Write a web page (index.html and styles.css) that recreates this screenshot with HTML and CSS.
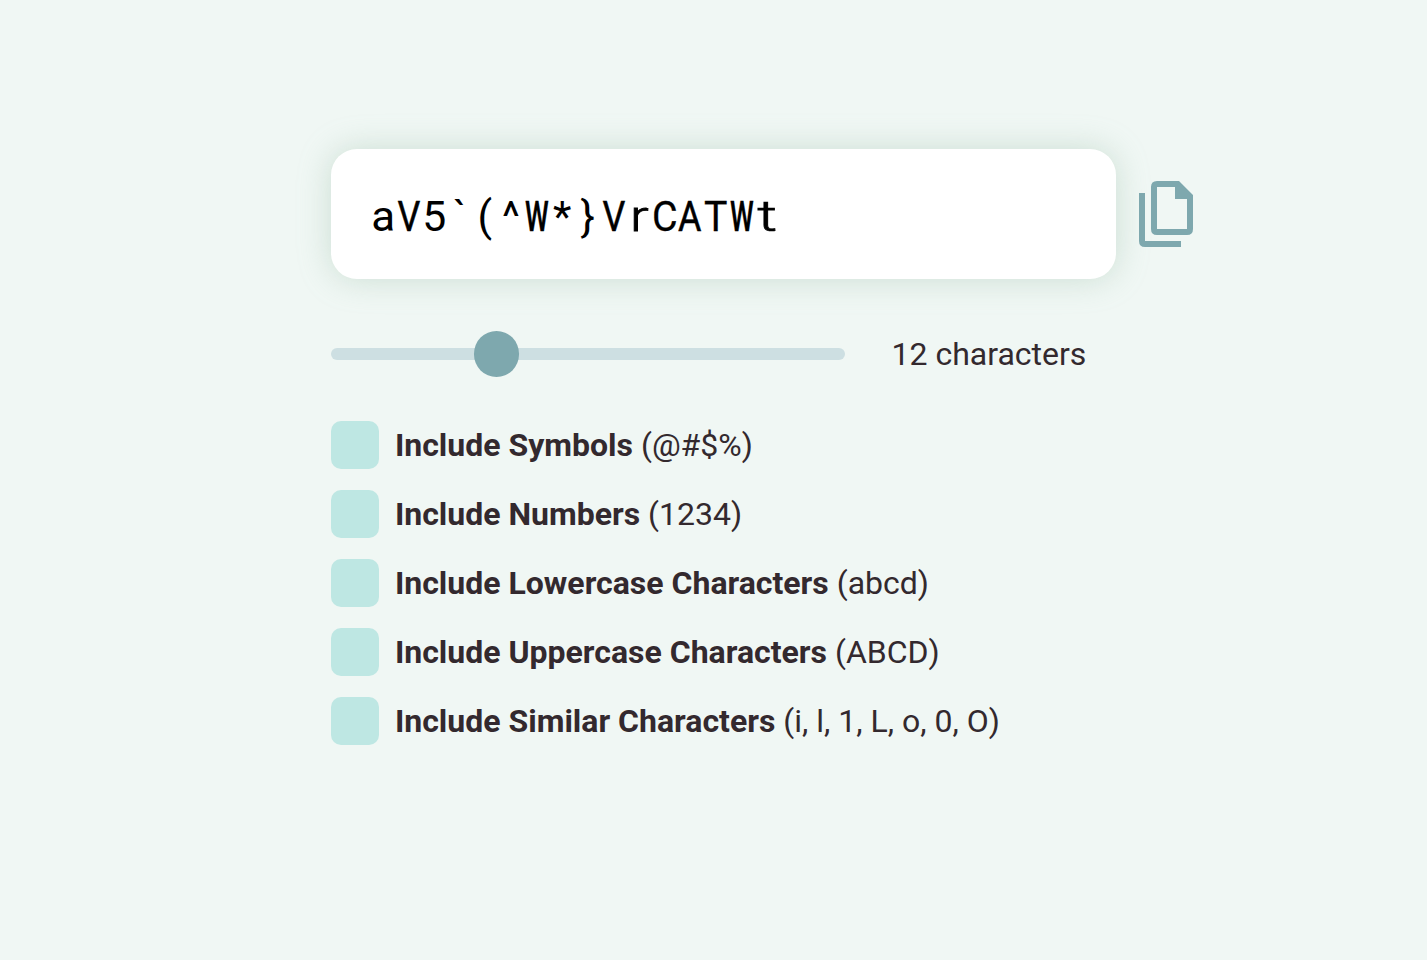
FILE: index.html
```html
<!DOCTYPE html>
<html lang="en">
<head>
<meta charset="utf-8">
<title>Password generator</title>
<link rel="stylesheet" href="styles.css">
</head>
<body>
<main class="generator">
  <div class="result">
    <div class="password"><span class="a">a</span><span class="cap">V</span><span>5</span><span class="tick">`</span><span class="paren">(</span><span class="caret">^</span><span class="w">W</span><span class="star">*</span><span class="brace">}</span><span class="cap">V</span><span class="r">r</span><span class="c">C</span><span class="cap">A</span><span class="c">T</span><span class="w">W</span><span class="t">t</span></div>
    <svg class="copy" viewBox="0 0 54 66" role="img" aria-label="Copy"><path fill-rule="evenodd" d="M0 12H6V60H42V66H6Q0 66 0 60ZM18 0H40L54 14V48Q54 54 48 54H18Q12 54 12 48V6Q12 0 18 0ZM18 6V48H48V18H36V6Z"/></svg>
  </div>
  <div class="length">
    <div class="track"><div class="thumb"></div></div>
    <div class="count">12 characters</div>
  </div>
  <div class="options">
    <div class="option"><i class="box"></i><p><b>Include Symbols</b> (@#$%)</p></div>
    <div class="option"><i class="box"></i><p><b>Include Numbers</b> (1234)</p></div>
    <div class="option"><i class="box"></i><p><b>Include Lowercase Characters</b> (abcd)</p></div>
    <div class="option"><i class="box"></i><p><b>Include Uppercase Characters</b> (ABCD)</p></div>
    <div class="option"><i class="box"></i><p><b>Include Similar Characters</b> (i, l, 1, L, o, 0, O)</p></div>
  </div>
</main>
</body>
</html>
```
FILE: styles.css
```css
* { box-sizing: border-box; }
body { margin: 0; min-height: 960px; background: #f0f7f4; color: #33292e; font-family: Roboto, sans-serif; font-size: 32px; line-height: 48px; }
.generator { padding: 149px 0 0 331px; }
.result { display: flex; align-items: center; gap: 22.7px; }
.password { display: flex; align-items: center; width: 785px; height: 130px; padding: 4px 0 0 39.2px; border-radius: 26px; background: #fff; box-shadow: 0 0 32px rgba(148, 184, 162, .4); color: #000; font-size: 42.7px; }
.password span { display: flex; justify-content: center; width: 25.6px; }
.password .a { transform: translateX(.5px) scaleX(1.03); }
.password .cap { transform: scaleX(.84); -webkit-text-stroke: .5px #000; }
.password .c { transform: scaleX(.92); -webkit-text-stroke: .3px #000; }
.password .w { transform: scaleX(.63); font-weight: 500; -webkit-text-stroke: .4px #000; }
.password .t { transform: translateX(.5px) scaleX(1.45); font-weight: 300; -webkit-text-stroke: .7px #000; }
.password .r { transform: translateX(.5px) scaleX(1.3); font-weight: 300; -webkit-text-stroke: .8px #000; }
.password .paren { transform: translateX(-.5px); }
.copy { width: 54px; height: 66px; fill: #7ea8ae; }
.length { display: flex; align-items: center; gap: 46.5px; height: 46px; margin-top: 52px; }
.track { display: flex; align-items: center; width: 514px; height: 12px; padding-left: 142.5px; border-radius: 6px; background: #cddfe2; }
.thumb { flex: none; width: 45.5px; height: 45.5px; border-radius: 50%; background: #7ea8ae; }
.options { display: grid; gap: 21.3px; margin-top: 44px; }
.option { display: flex; gap: 16.2px; height: 47.7px; align-items: center; }
.option p { margin: 0; }
.box { width: 47.7px; height: 47.7px; border-radius: 10px; background: #bee7e3; }
```
